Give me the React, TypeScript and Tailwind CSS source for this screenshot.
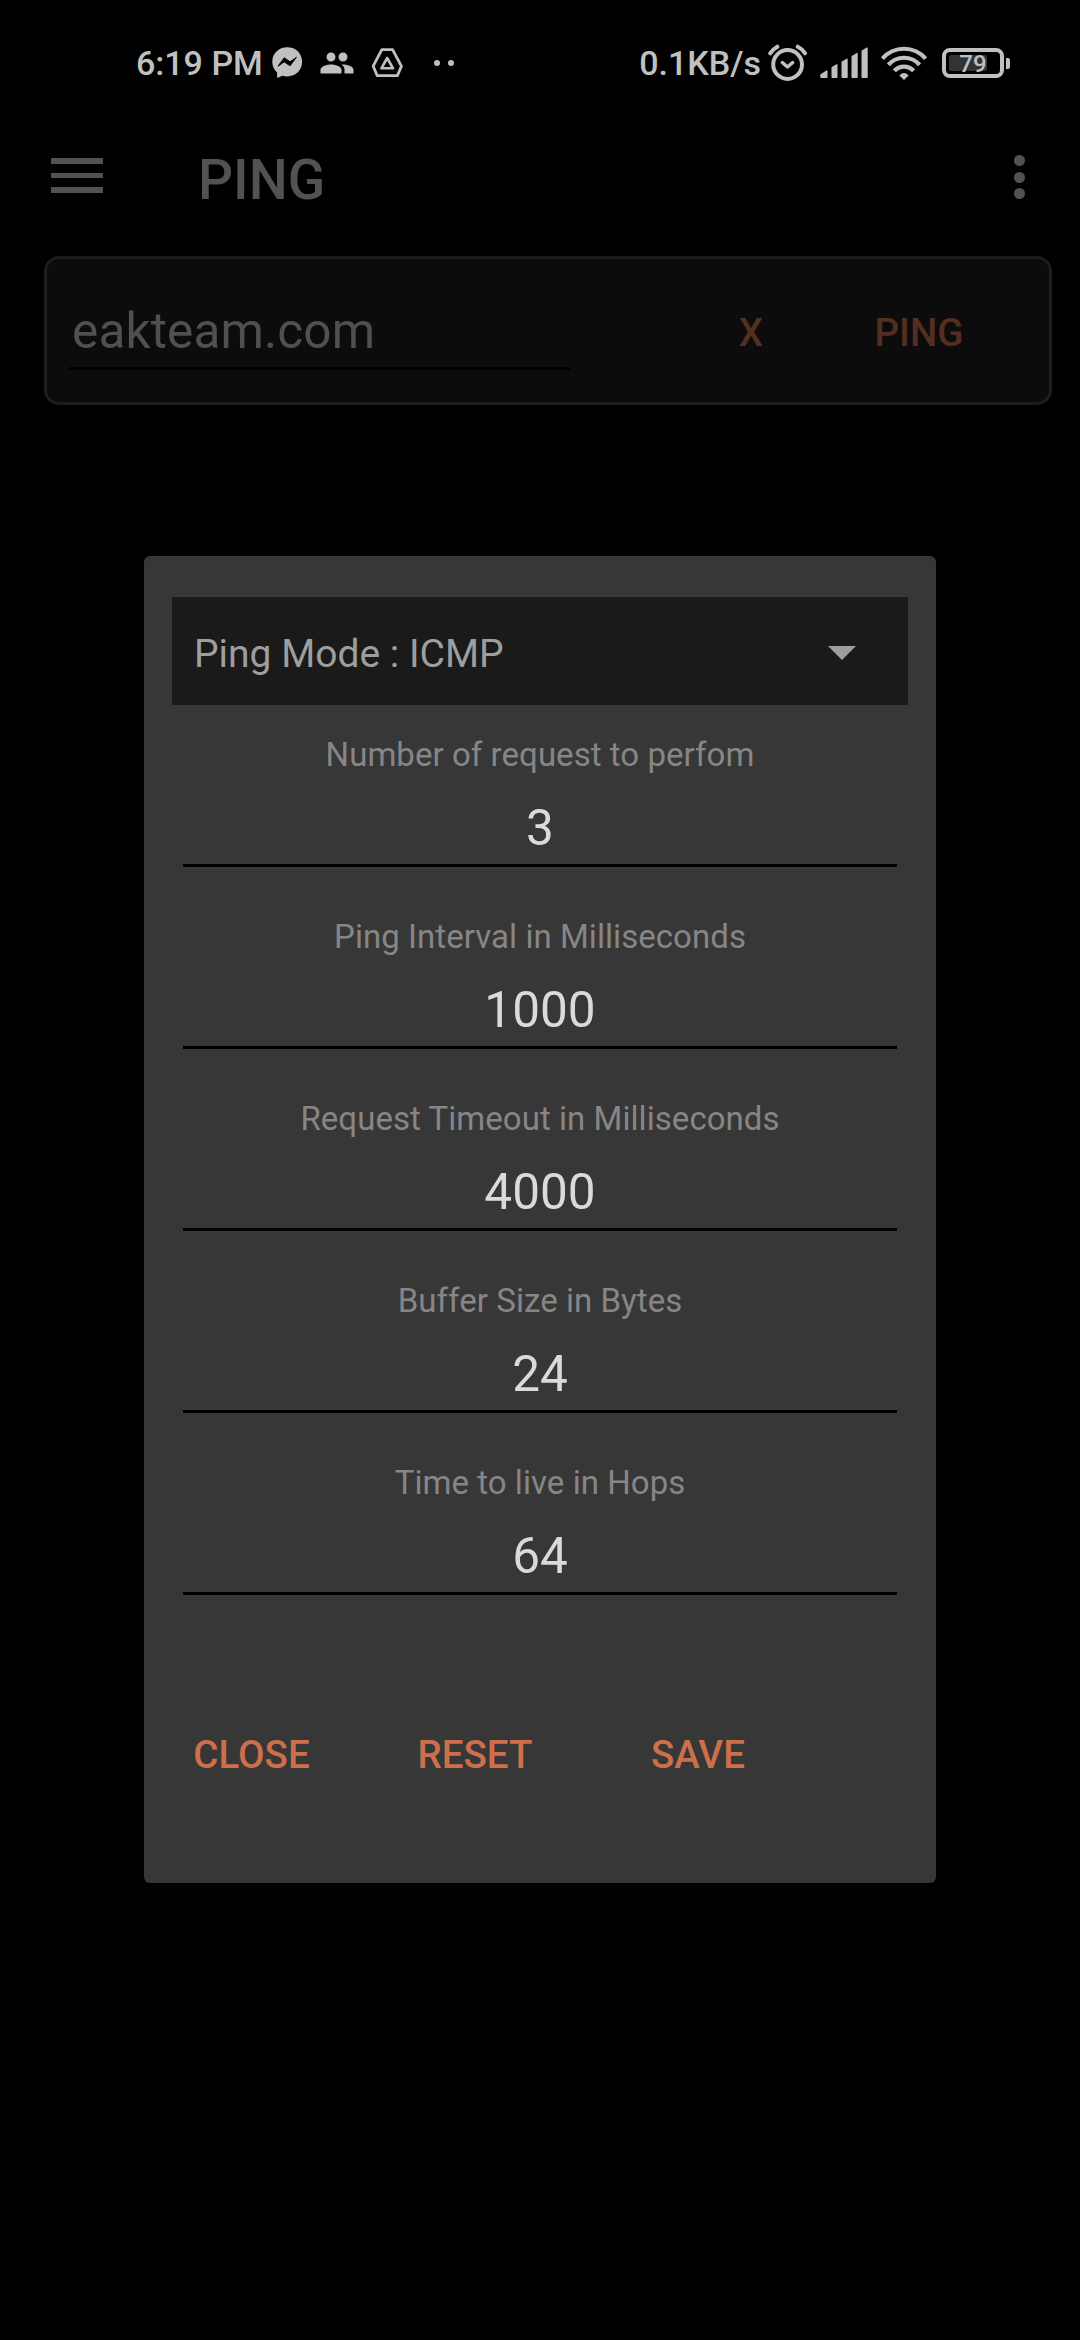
import React, { useState } from "react";
import { MdPeople } from "react-icons/md";

interface PingField {
  id: string;
  label: string;
  value: string;
}

const defaultFields: PingField[] = [
  { id: "count", label: "Number of request to perfom", value: "3" },
  { id: "interval", label: "Ping Interval in Milliseconds", value: "1000" },
  { id: "timeout", label: "Request Timeout in Milliseconds", value: "4000" },
  { id: "buffer", label: "Buffer Size in Bytes", value: "24" },
  { id: "ttl", label: "Time to live in Hops", value: "64" },
];

function MessengerIcon() {
  return (
    <svg width="31" height="32" viewBox="0 0 31 32" fill="none">
      <path
        d="M15.2 0.3C6.6 0.3 0.3 6.5 0.3 14.8c0 4.4 1.8 8.1 4.8 10.7v5.6l5.3-2.4c1.5 0.5 3.1 0.7 4.8 0.7 8.6 0 14.9-6.2 14.9-14.6S23.8 0.3 15.2 0.3Z"
        fill="#c0c0c0"
      />
      <path
        d="M6 19.2 12.2 10.8 18 14.8 24.4 10.4 18 18.8 12.2 14.8Z"
        fill="#000"
        stroke="#000"
        strokeWidth="1"
        strokeLinejoin="round"
      />
    </svg>
  );
}

function DriveIcon() {
  return (
    <svg width="33" height="31" viewBox="0 0 33 31" fill="none" stroke="#c0c0c0" strokeWidth="2.8" strokeLinejoin="round">
      <path d="M10.8 1.7H21.6L30.4 18.2 26.4 27.6H6.2L2.2 18.2Z" />
      <path d="M16.2 10 22 20.3H10.4Z" strokeWidth="2.6" />
    </svg>
  );
}

function AlarmIcon() {
  return (
    <svg width="40" height="38" viewBox="0 0 40 38" fill="none" stroke="#c0c0c0" strokeLinecap="round">
      <circle cx="19.6" cy="20.5" r="14.4" strokeWidth="4" />
      <path d="M14.3 18.5 19.5 23 24.7 18.5" strokeWidth="3.4" strokeLinejoin="round" />
      <path d="M2.2 9.3Q5 5 9.3 2.7M29.8 2.7Q34.5 5 37 9.3" strokeWidth="4" />
    </svg>
  );
}

function SignalIcon() {
  return (
    <svg width="49" height="32" viewBox="0 0 49 32" fill="#c0c0c0" stroke="#c0c0c0" strokeWidth="1.4" strokeLinejoin="round">
      <path d="M1 30.2V27.8L6.8 24V30.2Z" />
      <path d="M12.2 30.2V20.5L16.8 17.8V30.2Z" />
      <path d="M22.2 30.2V15L27 12.3V30.2Z" />
      <path d="M32.2 30.2V9.5L37 6.7V30.2Z" />
      <path d="M42.2 30.2V4L47 1.2V30.2Z" />
    </svg>
  );
}

function WifiIcon() {
  return (
    <svg width="48" height="35" viewBox="0 0 48 35" fill="none" stroke="#c0c0c0" strokeWidth="4.2">
      <path d="M2.4 12.6A28.6 28.6 0 0 1 45.6 12.6" />
      <path d="M8.4 18.8A20.8 20.8 0 0 1 39.6 18.8" />
      <path d="M14.4 24.9A12.8 12.8 0 0 1 33.6 24.9" />
      <path d="M19.4 29.4Q24 24.8 28.6 29.4L24 34Z" fill="#c0c0c0" stroke="none" />
    </svg>
  );
}

function Battery({ level }: { level: number }) {
  return (
    <div className="flex items-center gap-[2px]">
      <div className="relative h-[30px] w-[62px] rounded-[8px] border-4 border-[#c0c0c0] p-[3px]">
        <div className="h-4 w-[38px] rounded-[2px] bg-[#333333]" />
        <span className="absolute inset-0 flex items-center justify-center pt-[2px] text-[24px] leading-none font-medium">
          {level}
        </span>
      </div>
      <div className="h-[11px] w-1 rounded-r-[2px] bg-[#c0c0c0]" />
    </div>
  );
}

function StatusBar() {
  return (
    <div className="flex h-[126px] items-center pr-[70px] pl-[136px] text-[34px] font-medium text-[#c0c0c0]">
      <span className="w-[136px] whitespace-nowrap">6:19 PM</span>
      <MessengerIcon />
      <MdPeople size={36} className="ml-[16px]" />
      <div className="ml-[16px]">
        <DriveIcon />
      </div>
      <div className="ml-[30px] flex gap-2">
        <span className="size-[6px] rounded-full bg-[#c0c0c0]" />
        <span className="size-[6px] rounded-full bg-[#c0c0c0]" />
      </div>
      <div className="ml-auto flex items-center">
        <span className="whitespace-nowrap">0.1KB/s</span>
        <div className="ml-[7px]">
          <AlarmIcon />
        </div>
        <div className="ml-[12px]">
          <SignalIcon />
        </div>
        <div className="mr-[14px] ml-[11px]">
          <WifiIcon />
        </div>
        <Battery level={79} />
      </div>
    </div>
  );
}

function AppBar() {
  return (
    <header className="flex h-[102px] items-center pr-[55px] pl-[51px] text-[#525252]">
      <div className="-mt-[3px] flex w-[52px] flex-col gap-[9px]">
        <span className="h-[5.5px] bg-[#525252]" />
        <span className="h-[5.5px] bg-[#525252]" />
        <span className="h-[5.5px] bg-[#525252]" />
      </div>
      <h1 className="ml-[95px] pt-[6px] text-[55px] font-medium">PING</h1>
      <div className="ml-auto flex flex-col gap-[5.5px]">
        <span className="size-[11px] rounded-full bg-[#525252]" />
        <span className="size-[11px] rounded-full bg-[#525252]" />
        <span className="size-[11px] rounded-full bg-[#525252]" />
      </div>
    </header>
  );
}

function HostCard() {
  return (
    <div className="mt-[28px] mr-[28px] ml-[44px] flex h-[149px] rounded-[15px] border-3 border-[#1d1d1d] bg-[#0c0c0c]">
      <div className="ml-[22px] w-[501px] pt-[43px]">
        <p className="pl-[3px] text-[49.5px] leading-[58px] tracking-[0.15px] text-[#505050]">eakteam.com</p>
        <div className="mt-[7px] h-[3px] bg-black" />
      </div>
      <button className="ml-[101px] w-[160px] pt-[4px] text-[38.5px] font-medium text-[#542e20]">X</button>
      <button className="ml-[8px] w-[160px] pt-[4px] text-[38.5px] font-medium text-[#542e20]">PING</button>
    </div>
  );
}

function PingSettings() {
  const [fields] = useState<PingField[]>(defaultFields);

  return (
    <div className="mt-[556px] h-[1327px] w-[792px] rounded-[6px] bg-[#373737] px-[28px] pt-[41px]">
      <div className="flex h-[108px] items-center justify-between bg-[#1a1a1a] pr-[52px] pl-[22px] text-[#9e9e9e]">
        <span className="pt-[7px] text-[39px]">Ping Mode : ICMP</span>
        <svg width="28" height="14" viewBox="0 0 28 14" fill="currentColor" className="mt-[3px]">
          <path d="M0 0H28L14 14Z" />
        </svg>
      </div>
      {fields.map((field) => (
        <div key={field.id} className="h-[182px] px-[11px] pt-[30px] text-center">
          <p className="text-[33px] leading-[40px] tracking-[0.05px] text-[#868686]">{field.label}</p>
          <p className="mt-[23px] text-[49.5px] leading-[60px] text-[#dadada]">{field.value}</p>
          <div className="mt-[6px] h-[3px] bg-black" />
        </div>
      ))}
      <div className="mt-[74px] flex h-[132px] gap-[64px] text-[38.5px] font-medium text-[#cd6f4b]">
        <button className="w-[159px]">CLOSE</button>
        <button className="w-[160px]">RESET</button>
        <button className="w-[158px]">SAVE</button>
      </div>
    </div>
  );
}

export default function App() {
  return (
    <div className="relative h-[2340px] w-[1080px] overflow-hidden bg-black font-['Roboto',sans-serif]">
      <StatusBar />
      <AppBar />
      <HostCard />
      <div className="absolute inset-0 flex items-start justify-center">
        <PingSettings />
      </div>
    </div>
  );
}
